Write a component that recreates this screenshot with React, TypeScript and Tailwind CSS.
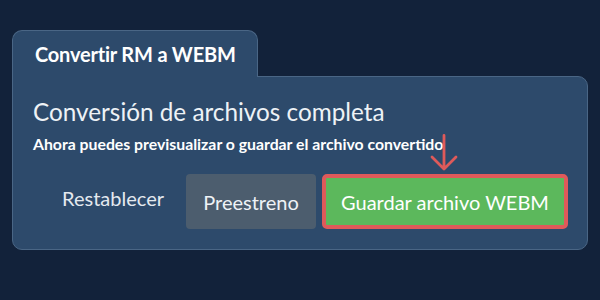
import React from 'react';

const font = { fontFamily: 'Lato, "Open Sans", sans-serif' };

const App = () => {
  return (
    <div className="w-[600px] h-[300px] bg-[#12223a] pt-[30px] px-[12px]" style={font}>
      {/* Tab */}
      <div className="relative z-10 w-[246px] h-[47px] -mb-px bg-[#2d4a6b] border border-b-0 border-[#4a6685] rounded-t-[10px] flex items-center pl-[22px]">
        <span className="text-white font-bold text-[20px] tracking-[-0.2px]">Convertir RM a WEBM</span>
      </div>

      {/* Panel */}
      <div className="relative w-[576px] h-[174px] bg-[#2d4a6b] border border-[#4a6685] rounded-b-[10px] rounded-tr-[10px] pl-[20px] pr-[19px] pt-[21px]">
        <h1 className="text-[#eef2f6] text-[24.3px] leading-[28px]">Conversión de archivos completa</h1>
        <p className="text-white font-bold text-[15.8px] leading-[20px] mt-[8px]">
          Ahora puedes previsualizar o guardar el archivo convertido
        </p>

        <div className="flex justify-end items-center mt-[20px]">
          <button className="h-[55px] px-[12px] text-[#e4e9ef] text-[20px] pb-[8px] mr-[10px]">Restablecer</button>
          <button className="h-[55px] w-[130px] rounded-[4px] bg-[#4c5d6e] text-[#eef2f6] text-[20px]">Preestreno</button>
          <button className="h-[55px] w-[246px] ml-[6px] rounded-[5px] bg-[#5cb85c] border-[4px] border-[#df5a5a] text-white text-[20px]">
            Guardar archivo WEBM
          </button>
        </div>

        {/* Arrow pointer */}
        <svg className="absolute left-[415px] top-[57px]" width="32" height="38" viewBox="0 0 32 38" fill="none">
          <path d="M16 1.5 V35 M4 23 L16 35 L28 23" stroke="#df5a5a" strokeWidth="2.8" strokeLinecap="round" strokeLinejoin="round" />
        </svg>
      </div>
    </div>
  );
};

export default App;
